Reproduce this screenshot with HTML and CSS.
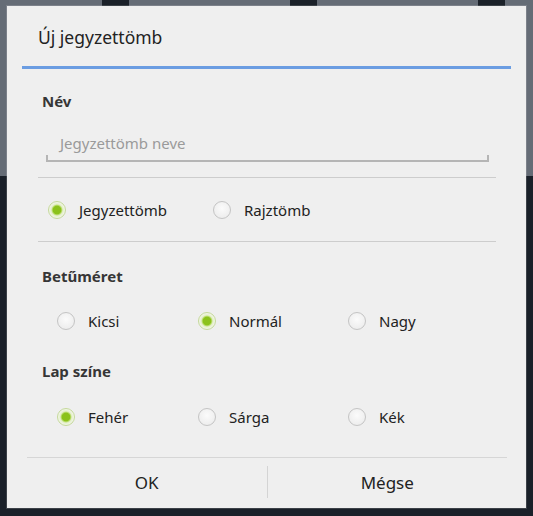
FILE: index.html
```html
<!DOCTYPE html>
<html lang="hu">
<head>
<meta charset="utf-8">
<title>Új jegyzettömb</title>
<link rel="stylesheet" href="styles.css">
</head>
<body>
<div class="dialog">
  <div class="title">Új jegyzettömb</div>
  <div class="title-rule"></div>
  <div class="content">
    <div class="heading">Név</div>
    <div class="input"><span class="placeholder">Jegyzettömb neve</span></div>
    <div class="sep"></div>
    <div class="row row-type">
      <label class="opt opt-wide"><span class="radio on"></span><span class="lbl">Jegyzettömb</span></label>
      <label class="opt"><span class="radio"></span><span class="lbl">Rajztömb</span></label>
    </div>
    <div class="sep"></div>
    <div class="heading h-size">Betűméret</div>
    <div class="row row-three row-size">
      <label class="opt"><span class="radio"></span><span class="lbl">Kicsi</span></label>
      <label class="opt"><span class="radio on"></span><span class="lbl">Normál</span></label>
      <label class="opt"><span class="radio"></span><span class="lbl">Nagy</span></label>
    </div>
    <div class="heading h-color">Lap színe</div>
    <div class="row row-three row-color">
      <label class="opt"><span class="radio on"></span><span class="lbl">Fehér</span></label>
      <label class="opt"><span class="radio"></span><span class="lbl">Sárga</span></label>
      <label class="opt"><span class="radio"></span><span class="lbl">Kék</span></label>
    </div>
  </div>
  <div class="buttons">
    <div class="btn">OK</div>
    <div class="vdiv"></div>
    <div class="btn">Mégse</div>
  </div>
</div>
</body>
</html>
```
FILE: styles.css
```css
html, body {
  margin: 0;
  padding: 0;
}
body {
  width: 533px;
  height: 516px;
  overflow: hidden;
  font-family: "Noto Sans", "Open Sans", sans-serif;
  background:
    linear-gradient(#1b2129, #1b2129) 102px 0 / 27px 7px no-repeat,
    linear-gradient(#1b2129, #1b2129) 290px 0 / 27px 7px no-repeat,
    linear-gradient(#1b2129, #1b2129) 478px 0 / 27px 7px no-repeat,
    linear-gradient(#656c76 0, #656c76 176px, #1a2029 176px, #1a2029 100%);
  padding: 6px 7px 0 7px;
  box-sizing: border-box;
}
.dialog {
  width: 519px;
  height: 502px;
  background: #efefef;
  display: flex;
  flex-direction: column;
  box-shadow: 0 0 0 1px rgba(255,255,255,0.15);
}
.title {
  height: 60px;
  line-height: 62px;
  padding-left: 31px;
  font-size: 17.5px;
  color: #222;
}
.title-rule {
  height: 3px;
  margin: 0 15px;
  background: #6b9de2;
}
.content {
  padding: 22px 30px 0 31px;
  display: flex;
  flex-direction: column;
}
.heading {
  font-size: 15px;
  font-weight: bold;
  line-height: 20px;
  color: #363636;
  padding-left: 4px;
}
.input {
  margin: 0 7px 0 8px;
  padding: 22px 0 7px 14px;
  border-bottom: 2px solid #b5b5b5;
  position: relative;
  line-height: 20px;
  font-size: 15px;
}
.input::before, .input::after {
  content: "";
  position: absolute;
  bottom: 0;
  width: 2px;
  height: 5px;
  background: #b5b5b5;
}
.input::before { left: 0; }
.input::after { right: 0; }
.placeholder {
  color: #9a9a9a;
}
.sep {
  height: 1px;
  background: #cdcdcd;
}
.input + .sep {
  margin-top: 15px;
}
.row {
  display: flex;
  align-items: center;
  font-size: 15px;
  color: #222;
}
.row-type {
  height: 63px;
  padding-left: 10px;
}
.opt {
  display: flex;
  align-items: center;
  gap: 13px;
}
.opt-wide {
  width: 165px;
}
.row-three {
  display: grid;
  grid-template-columns: 141px 150px auto;
  padding-left: 19px;
}
.h-size { margin-top: 24px; }
.row-size { height: 70px; }
.h-color { margin-top: 5px; }
.row-color { height: 72px; }
.radio {
  width: 16px;
  height: 16px;
  border-radius: 50%;
  border: 1px solid #c4c4c4;
  background: radial-gradient(circle at 50% 40%, #fbfbfb, #e9e9e9);
  flex: none;
}
.radio.on {
  border-color: #c5d99a;
  background: radial-gradient(circle, #8bc21b 0, #8bc21b 3.8px, #b8dc6a 4.8px, #e4efc8 5.8px, #f3f6ec 8px);
}
.lbl {
  line-height: 20px;
}
.buttons {
  margin: auto 19px 0 20px;
  border-top: 1px solid #d6d6d6;
  height: 50px;
  display: flex;
  align-items: center;
  font-size: 17px;
  color: #222;
}
.btn {
  flex: 1;
  text-align: center;
  line-height: 48px;
}
.vdiv {
  width: 1px;
  height: 32px;
  background: #d4d4d4;
  align-self: flex-start;
  margin-top: 8px;
}
```
